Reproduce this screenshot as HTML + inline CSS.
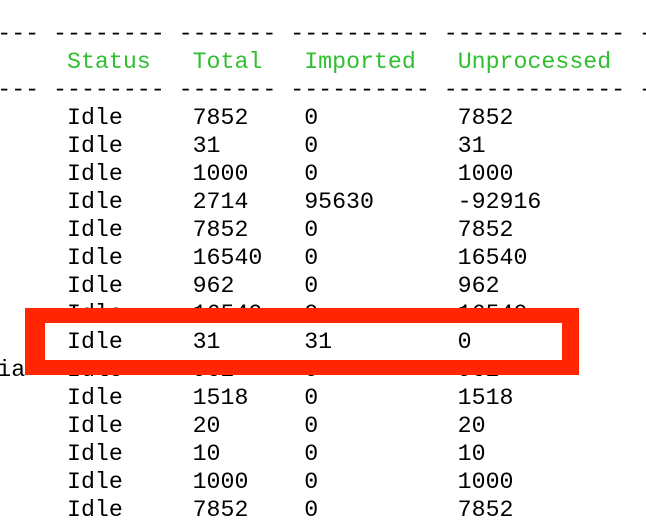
<!DOCTYPE html>
<html><head><meta charset="utf-8"><style>
html,body{margin:0;padding:0;background:#fff;width:646px;height:520px;overflow:hidden;position:relative}
pre{position:absolute;left:-2.75px;top:20px;margin:0;font-family:"Liberation Mono",monospace;font-size:23.25px;line-height:28px;color:#000;white-space:pre}
.g{color:#2fbf2f}
.box{position:absolute;left:25px;top:308px;width:517px;height:37px;border:solid #ff2600;border-width:15px 17px 15px 20px;background:#fff}
.in{position:absolute;left:-2.75px;top:328px;margin:0;font-family:"Liberation Mono",monospace;font-size:23.25px;line-height:28px;color:#000;white-space:pre}
</style></head><body>
<pre>--- -------- ------- ---------- ------------- -
     <span class="g">Status</span>   <span class="g">Total</span>   <span class="g">Imported</span>   <span class="g">Unprocessed</span>
--- -------- ------- ---------- ------------- -
     Idle     7852    0          7852
     Idle     31      0          31
     Idle     1000    0          1000
     Idle     2714    95630      -92916
     Idle     7852    0          7852
     Idle     16540   0          16540
     Idle     962     0          962
     Idle     16540   0          16540
     Idle     31      31         0
ia   Idle     962     0          962
     Idle     1518    0          1518
     Idle     20      0          20
     Idle     10      0          10
     Idle     1000    0          1000
     Idle     7852    0          7852</pre>
<div class="box"></div>
<pre class="in">     Idle     31      31         0</pre>
</body></html>
